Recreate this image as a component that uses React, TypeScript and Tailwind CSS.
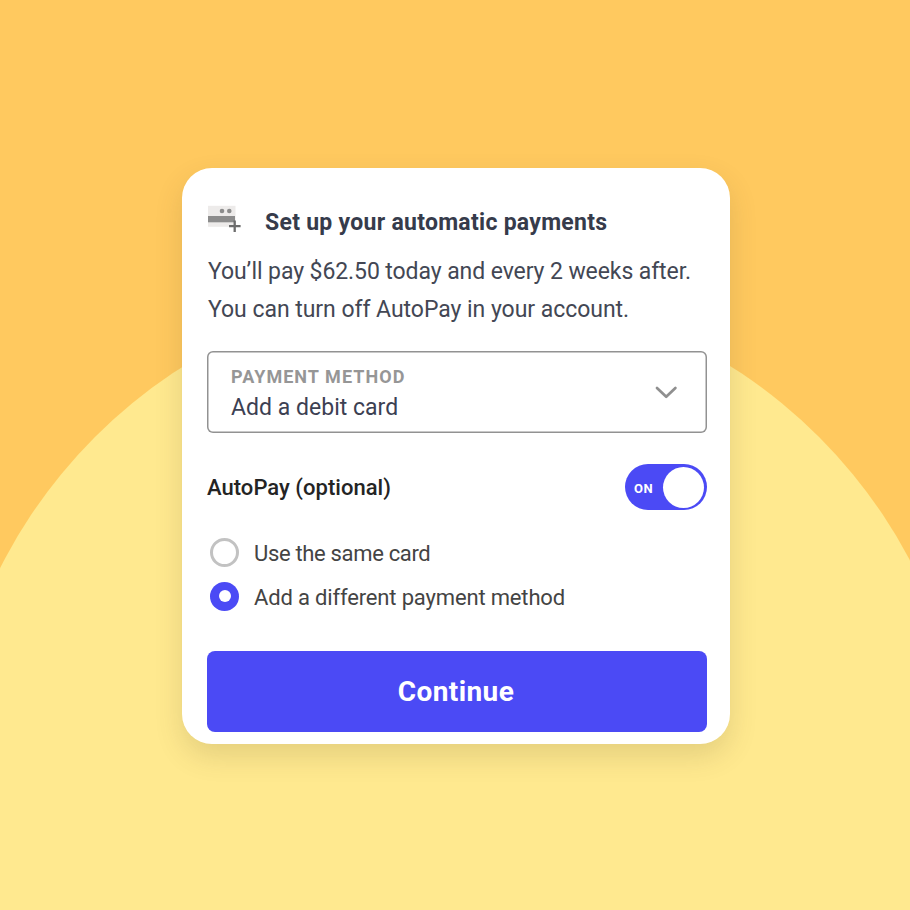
import React from "react";

function CardPlusIcon() {
  return (
    <svg width="34" height="28" viewBox="0 0 34 28" className="block shrink-0" aria-hidden="true">
      <rect x="1" y="0.8" width="27.5" height="21" fill="#edebea" />
      <rect x="1" y="11" width="27" height="6.3" fill="#8c8c8c" />
      <circle cx="15" cy="6" r="2.3" fill="#8c8c8c" />
      <circle cx="22.3" cy="6" r="2.3" fill="#8c8c8c" />
      <path d="M27.7 15.5V27M22 21.2H33.6" stroke="#6c6c6c" strokeWidth="2.3" />
    </svg>
  );
}

function ChevronDown() {
  return (
    <svg width="24" height="14" viewBox="0 0 24 14" fill="none" className="block" aria-hidden="true">
      <path d="M3 3L12.2 11.8L21.4 3" stroke="#8f8f8f" strokeWidth="2.7" strokeLinecap="round" strokeLinejoin="round" />
    </svg>
  );
}

export default function App() {
  return (
    <div className="relative isolate flex h-[910px] w-[910px] overflow-hidden bg-[#ffc95f] pt-[168px] pl-[182px] font-['Roboto','Liberation_Sans',sans-serif]">
      <div className="absolute top-[287px] left-[-55px] -z-10 size-[1024px] rounded-full bg-[#ffe98f]" />

      <main className="flex h-[576px] w-[548px] flex-col rounded-[30px] bg-white pr-[23px] pl-[25px] shadow-[0_12px_28px_rgba(90,75,40,0.16)]">
        <header className="mt-[37px] flex h-[34px] items-start gap-[24px]">
          <CardPlusIcon />
          <h1 className="pt-px text-[23px] leading-[34px] font-bold tracking-[0.28px] whitespace-nowrap text-[#363b4b]">
            Set up your automatic payments
          </h1>
        </header>

        <p className="mt-[14px] text-[23px] leading-[38px] whitespace-nowrap text-[#434754]">
          <span className="block pl-px tracking-[-0.09px]">You’ll pay $62.50 today and every 2 weeks after.</span>
          <span className="block pl-px tracking-[-0.04px]">You can turn off AutoPay in your account.</span>
        </p>

        <button className="mt-[22px] flex h-[82px] w-[500px] shrink-0 items-center justify-between rounded-[6px] pr-[29px] pl-[24px] text-left whitespace-nowrap shadow-[inset_0_0_0_1.5px_#929292]">
          <span className="flex flex-col pt-[4px]">
            <span className="text-[18px] leading-[26px] font-bold tracking-[1.05px] text-[#969696]">PAYMENT METHOD</span>
            <span className="pt-px text-[23px] leading-[34px] tracking-[0.02px] text-[#3c4052]">Add a debit card</span>
          </span>
          <ChevronDown />
        </button>

        <div className="mt-[31px] flex h-[46px] w-[500px] shrink-0 items-center justify-between">
          <span className="pt-[2px] text-[22px] leading-[30px] font-medium tracking-[0.03px] whitespace-nowrap text-[#242424]">
            AutoPay (optional)
          </span>
          <span className="flex h-[46px] w-[82px] items-center justify-between rounded-full bg-[#4b4af5] pr-[3px] pl-[9px]">
            <span className="pt-[4px] text-[13px] font-bold tracking-[0.5px] text-white">ON</span>
            <span className="size-[41px] rounded-full bg-white" />
          </span>
        </div>

        <div className="mt-[20px] flex flex-col pl-[3px] text-[22px] leading-[44px] whitespace-nowrap text-[#444444]">
          <label className="flex h-[44px] items-center gap-[15px]">
            <span className="size-[29px] rounded-full border-3 border-[#c2c2c2]" />
            <span className="pt-[3px] tracking-[-0.33px]">Use the same card</span>
          </label>
          <label className="flex h-[44px] items-center gap-[15px]">
            <span className="flex size-[29px] items-center justify-center rounded-full bg-[#4b4af5]">
              <span className="size-[12px] rounded-full bg-white" />
            </span>
            <span className="pt-[3px] tracking-[-0.16px]">Add a different payment method</span>
          </label>
        </div>

        <button className="mt-[33px] h-[81px] w-[500px] shrink-0 rounded-[8px] bg-[#4b4af5] pt-px pr-[2px] text-[28px] font-bold tracking-[0.4px] text-white">
          Continue
        </button>
      </main>
    </div>
  );
}
